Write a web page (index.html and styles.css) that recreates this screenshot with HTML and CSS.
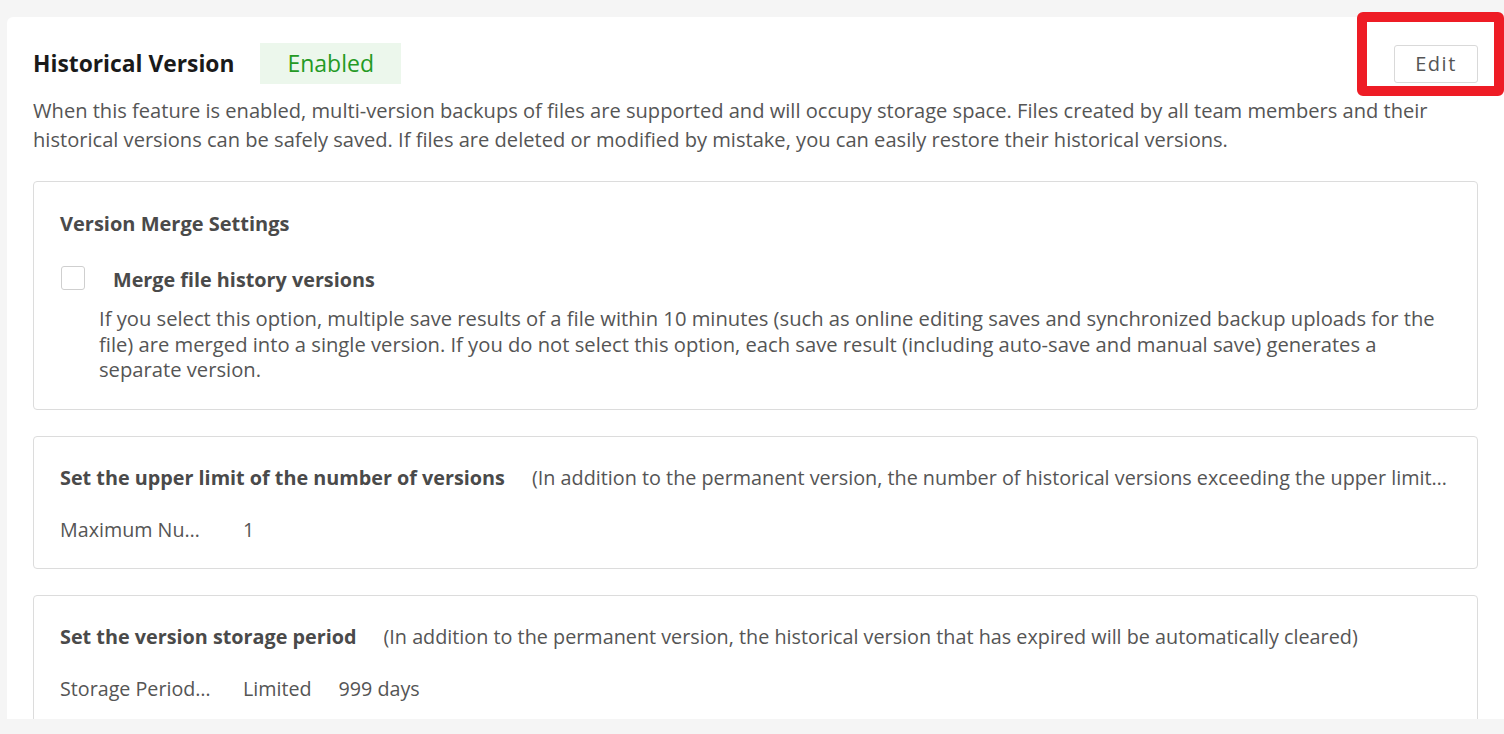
FILE: index.html
```html
<!DOCTYPE html>
<html lang="en">
<head>
<meta charset="utf-8">
<title>Historical Version</title>
<link rel="stylesheet" href="styles.css">
</head>
<body>
<div class="panel">
  <div class="header">
    <h1 class="title">Historical Version</h1>
    <span class="tag">Enabled</span>
    <button class="edit-btn">Edit</button>
  </div>
  <p class="intro">When this feature is enabled, multi-version backups of files are supported and will occupy storage space. Files created by all team members and their historical versions can be safely saved. If files are deleted or modified by mistake, you can easily restore their historical versions.</p>

  <section class="card card-merge">
    <h2 class="card-title">Version Merge Settings</h2>
    <label class="check-row">
      <span class="checkbox"></span>
      <span class="check-label">Merge file history versions</span>
    </label>
    <p class="check-desc">If you select this option, multiple save results of a file within 10 minutes (such as online editing saves and synchronized backup uploads for the file) are merged into a single version. If you do not select this option, each save result (including auto-save and manual save) generates a separate version.</p>
  </section>

  <section class="card">
    <div class="card-head">
      <h2 class="card-title">Set the upper limit of the number of versions</h2>
      <span class="card-note">(In addition to the permanent version, the number of historical versions exceeding the upper limit will be automatically cleared)</span>
    </div>
    <div class="field-row">
      <span class="field-label">Maximum Number of Versions</span>
      <span class="field-value">1</span>
    </div>
  </section>

  <section class="card">
    <div class="card-head">
      <h2 class="card-title">Set the version storage period</h2>
      <span class="card-note">(In addition to the permanent version, the historical version that has expired will be automatically cleared)</span>
    </div>
    <div class="field-row">
      <span class="field-label">Storage Period Type</span>
      <span class="field-value">Limited</span>
      <span class="field-value">999 days</span>
    </div>
  </section>
</div>
<div class="highlight"></div>
</body>
</html>
```

FILE: styles.css
```css
html, body {
  margin: 0;
  padding: 0;
}
body {
  background: #f5f5f5;
  font-family: "Open Sans", "Noto Sans", sans-serif;
  color: #555;
  height: 734px;
  overflow: hidden;
}
.panel {
  margin: 17px 0 0 7px;
  height: 702px;
  box-sizing: border-box;
  background: #fff;
  border-radius: 6px 0 0 0;
  padding: 26px 26px 0 26px;
  overflow: hidden;
}
.header {
  display: flex;
  align-items: center;
  height: 41px;
}
.title {
  margin: 0 26px 0 0;
  font-size: 22.8px;
  font-weight: 700;
  color: #1a1a1a;
  line-height: 41px;
}
.tag {
  background: #ecf7ec;
  color: #249a24;
  font-size: 23px;
  line-height: 41px;
  padding: 0 27px;
}
.edit-btn {
  margin-left: auto;
  width: 84px;
  height: 38px;
  background: #fff;
  border: 1px solid #d9d9d9;
  border-radius: 3px;
  font-family: inherit;
  font-size: 20px;
  letter-spacing: 1.5px;
  color: #555;
  padding: 0;
}
.intro {
  margin: 12px 0 0 0;
  font-size: 20.1px;
  line-height: 29px;
}
.card {
  border: 1px solid #dcdcdc;
  border-radius: 4px;
  padding: 0 26px 25px 26px;
  margin-top: 26px;
}
.card-merge {
  margin-top: 27px;
  padding-bottom: 26px;
}
.card-title {
  margin: 0;
  font-size: 19.8px;
  font-weight: 700;
  color: #4a4a4a;
  line-height: 26px;
  white-space: nowrap;
}
.card-merge .card-title {
  padding-top: 29px;
  font-size: 20px;
}
.check-row {
  display: flex;
  align-items: center;
  margin-top: 30px;
}
.checkbox {
  width: 22px;
  height: 22px;
  border: 1px solid #cfcfcf;
  border-radius: 3px;
  background: #fff;
  margin: -4px 0 0 1px;
}
.check-label {
  margin-left: 28px;
  font-size: 19.8px;
  font-weight: 700;
  color: #4a4a4a;
  line-height: 26px;
}
.check-desc {
  margin: 13px 0 0 39px;
  font-size: 20.2px;
  line-height: 25.5px;
}
.card-head {
  display: flex;
  align-items: center;
  padding-top: 28px;
  min-width: 0;
}
.card-note {
  margin-left: 27px;
  font-size: 19.8px;
  line-height: 26px;
  white-space: nowrap;
  overflow: hidden;
  text-overflow: ellipsis;
  min-width: 0;
}
.card-head + .field-row {
  margin-top: 26px;
}
.field-row {
  display: flex;
  align-items: center;
  font-size: 19.7px;
  line-height: 26px;
}
.field-label {
  width: 153px;
  margin-right: 30px;
  white-space: nowrap;
  overflow: hidden;
  text-overflow: ellipsis;
}
.field-value {
  margin-right: 27px;
}
.highlight {
  position: absolute;
  left: 1357px;
  top: 12px;
  width: 147px;
  height: 84px;
  box-sizing: border-box;
  border: 10px solid #ee1c25;
  border-radius: 6px;
}
```
